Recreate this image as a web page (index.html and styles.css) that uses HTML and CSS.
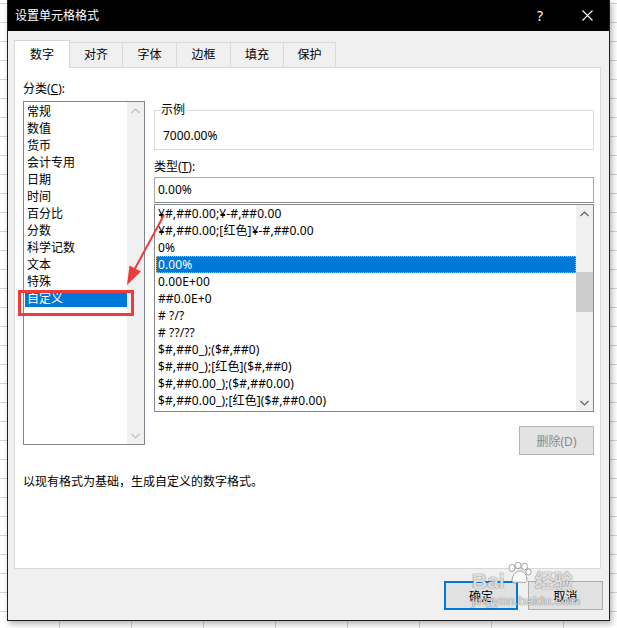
FILE: index.html
```html
<!DOCTYPE html>
<html lang="zh-CN">
<head>
    <meta charset="UTF-8">
    <title>设置单元格格式</title>
    <link rel="stylesheet" href="styles.css">
</head>
<body>
    <div class="screen">
        <div class="dialog">
            <div class="titlebar">
                <span class="title">设置单元格格式</span>
                <span class="help">?</span>
                <svg class="close" width="11" height="11" viewBox="0 0 11 11">
                    <path d="M0.5 0.5 L10.5 10.5 M10.5 0.5 L0.5 10.5" stroke="#fff" stroke-width="1.1" fill="none"/>
                </svg>
            </div>

            <div class="tabs">
                <div class="tab active w56">数字</div>
                <div class="tab w54">对齐</div>
                <div class="tab w55">字体</div>
                <div class="tab w55">边框</div>
                <div class="tab w54">填充</div>
                <div class="tab w53">保护</div>
            </div>

            <div class="panel">
                <div class="panel-body">
                    <div class="col-left">
                        <div class="label">分类(<u>C</u>):</div>
                        <div class="listbox cat">
                            <ul class="items">
                                <li>常规</li>
                                <li>数值</li>
                                <li>货币</li>
                                <li>会计专用</li>
                                <li>日期</li>
                                <li>时间</li>
                                <li>百分比</li>
                                <li>分数</li>
                                <li>科学记数</li>
                                <li>文本</li>
                                <li>特殊</li>
                                <li class="selected">自定义</li>
                            </ul>
                            <div class="vscroll disabled">
                                <div class="sb-btn">
                                    <svg width="9" height="6" viewBox="0 0 9 6"><polyline points="0.5,5 4.5,1 8.5,5" fill="none" stroke="currentColor" stroke-width="1.2"/></svg>
                                </div>
                                <div class="sb-track"></div>
                                <div class="sb-btn">
                                    <svg width="9" height="6" viewBox="0 0 9 6"><polyline points="0.5,1 4.5,5 8.5,1" fill="none" stroke="currentColor" stroke-width="1.2"/></svg>
                                </div>
                            </div>
                        </div>
                    </div>

                    <div class="col-right">
                        <fieldset class="sample">
                            <legend>示例</legend>
                            <div class="sample-value">7000.00%</div>
                        </fieldset>

                        <div class="label type-label">类型(<u>T</u>):</div>
                        <div class="textbox">0.00%</div>

                        <div class="listbox fmt">
                            <ul class="items">
                                <li>¥#,##0.00;¥-#,##0.00</li>
                                <li>¥#,##0.00;[红色]¥-#,##0.00</li>
                                <li>0%</li>
                                <li class="selected focus">0.00%</li>
                                <li>0.00E+00</li>
                                <li>##0.0E+0</li>
                                <li># ?/?</li>
                                <li># ??/??</li>
                                <li>$#,##0_);($#,##0)</li>
                                <li>$#,##0_);[红色]($#,##0)</li>
                                <li>$#,##0.00_);($#,##0.00)</li>
                                <li>$#,##0.00_);[红色]($#,##0.00)</li>
                            </ul>
                            <div class="vscroll">
                                <div class="sb-btn">
                                    <svg width="9" height="6" viewBox="0 0 9 6"><polyline points="0.5,5 4.5,1 8.5,5" fill="none" stroke="currentColor" stroke-width="1.2"/></svg>
                                </div>
                                <div class="sb-track"><div class="sb-thumb"></div></div>
                                <div class="sb-btn">
                                    <svg width="9" height="6" viewBox="0 0 9 6"><polyline points="0.5,1 4.5,5 8.5,1" fill="none" stroke="currentColor" stroke-width="1.2"/></svg>
                                </div>
                            </div>
                        </div>

                        <div class="del-row">
                            <button class="btn btn-disabled" disabled>删除(D)</button>
                        </div>
                    </div>
                </div>

                <p class="desc">以现有格式为基础，生成自定义的数字格式。</p>
            </div>

            <div class="footer">
                <button class="btn btn-ok">确定</button>
                <button class="btn btn-cancel">取消</button>
            </div>
        </div>

        <!-- 标注：红框和箭头 -->
        <div class="mark-box"></div>
        <svg class="mark-arrow" width="617" height="628" viewBox="0 0 617 628">
            <line x1="164" y1="215" x2="132" y2="274" stroke="#ee3b3b" stroke-width="2"/>
            <polygon points="127,285 129.5,265.5 141,271.5" fill="#ee3b3b"/>
        </svg>

        <!-- 水印 -->
        <div class="watermark">
            <div class="wm-top">
                <span class="wm-bai">Bai</span>
                <svg class="wm-paw" width="26" height="22" viewBox="0 0 26 22">
                    <g fill="rgba(255,255,255,0.8)" stroke="rgba(110,110,110,0.6)" stroke-width="1">
                        <ellipse cx="6" cy="6" rx="3" ry="3.6"/>
                        <ellipse cx="12" cy="3.5" rx="3" ry="3.2"/>
                        <ellipse cx="18.5" cy="4.5" rx="3" ry="3.4"/>
                        <ellipse cx="22.5" cy="10" rx="2.6" ry="3"/>
                        <path d="M6 19 C6 12 11 9 14 9 C18 9 21 13 21 18 C21 21 18 21 14 20 C10 21 6 22 6 19 Z"/>
                    </g>
                </svg>
                <span class="wm-cn">经验</span>
            </div>
            <div class="wm-url">jingyan.baidu.com</div>
        </div>
    </div>
</body>
</html>
```

FILE: styles.css
```css
* {
    box-sizing: border-box;
}
body {
    margin: 0;
    font-family: "Noto Sans", "Noto Sans CJK SC", sans-serif;
    font-size: 12px;
    line-height: 17px;
    color: #000;
}
.screen {
    position: relative;
    width: 617px;
    height: 628px;
    overflow: hidden;
    background-color: #fff;
    background-image:
        linear-gradient(#d4d4d4 1px, transparent 1px),
        linear-gradient(90deg, #d4d4d4 1px, transparent 1px);
    background-size: 100% 19px, 72px 100%;
    background-position: 0 3px, 59px 0;
}
.dialog {
    margin-left: 7px;
    width: 603px;
    height: 621px;
    background: #f0f0f0;
    border: 1px solid #1f1f1f;
    border-top: none;
    box-shadow: 2px 3px 6px rgba(0,0,0,0.3);
    display: flex;
    flex-direction: column;
}

/* 标题栏 */
.titlebar {
    height: 31px;
    flex-shrink: 0;
    background: #000;
    color: #fff;
    display: flex;
    align-items: center;
    padding: 0 16px 0 7px;
}
.title {
    flex: 1;
}
.help {
    width: 10px;
    text-align: center;
    font-size: 14px;
    margin-right: 37px;
}
.close {
    display: block;
}

/* 选项卡 */
.tabs {
    display: flex;
    align-items: flex-end;
    height: 27px;
    margin-top: 9px;
    padding-left: 6px;
    flex-shrink: 0;
}
.tab {
    height: 25px;
    line-height: 24px;
    text-align: center;
    background: #f0f0f0;
    border: 1px solid #d9d9d9;
    border-bottom: none;
    margin-left: -1px;
}
.tab.active {
    height: 28px;
    margin-left: 0;
    margin-bottom: -1px;
    padding-top: 2px;
    background: #fff;
    position: relative;
    z-index: 1;
}
.w53 { width: 53px; }
.w54 { width: 54px; }
.w55 { width: 55px; }
.w56 { width: 56px; }

/* 主面板 */
.panel {
    margin-left: 6px;
    width: 587px;
    height: 502px;
    flex-shrink: 0;
    background: #fff;
    border: 1px solid #d9d9d9;
    padding: 12px 0 0 8px;
}
.panel-body {
    display: flex;
    align-items: flex-start;
    gap: 9px;
}
.col-left {
    width: 122px;
}
.label {
    margin-bottom: 4px;
}
.col-right {
    width: 440px;
    margin-top: 23px;
}

/* 列表框 */
.listbox {
    display: flex;
    border: 1px solid #828790;
    background: #fff;
}
.listbox.cat {
    height: 344px;
}
.listbox.fmt {
    height: 208px;
    margin-top: 1px;
}
.items {
    flex: 1;
    list-style: none;
    margin: 0;
    padding: 1px 0 0 1px;
    overflow: hidden;
}
.fmt .items {
    padding-top: 0;
}
.items li {
    height: 17px;
    padding-left: 2px;
    white-space: nowrap;
}
.fmt .items li {
    letter-spacing: 0.1px;
}
.items li.selected {
    background: #0078d7;
    color: #fff;
}
.items li.focus {
    border: 1px dotted #e9b46a;
    padding-left: 1px;
    line-height: 15px;
}
.vscroll {
    width: 17px;
    background: #f0f0f0;
    display: flex;
    flex-direction: column;
    color: #606060;
}
.vscroll.disabled {
    color: #bfbfbf;
}
.sb-btn {
    height: 17px;
    display: flex;
    align-items: center;
    justify-content: center;
}
.sb-btn svg {
    display: block;
}
.sb-track {
    flex: 1;
}
.sb-thumb {
    margin-top: 50px;
    height: 40px;
    background: #cdcdcd;
}

/* 示例 */
.sample {
    margin: 0;
    padding: 10px 5px 5px 5px;
    border: 1px solid #dcdcdc;
}
.sample legend {
    padding: 0 1px;
    line-height: 14px;
}
.sample-value {
    padding-left: 3px;
}
.type-label {
    margin-top: 8px;
    margin-bottom: 2px;
}
.textbox {
    height: 26px;
    line-height: 24px;
    padding-left: 3px;
    border: 1px solid #a9a9a9;
    border-bottom-color: #8a8a8a;
}

/* 按钮 */
.btn {
    height: 29px;
    font-family: inherit;
    font-size: 12px;
    color: #000;
    background: #e1e1e1;
    border: 1px solid #adadad;
    padding: 0;
    cursor: pointer;
}
.del-row {
    display: flex;
    justify-content: flex-end;
    margin-top: 14px;
}
.btn-disabled {
    width: 75px;
    background: #e3e3e3;
    border-color: #b4b4b4;
    color: #8a8a8a;
}
.desc {
    margin: 18px 0 0 0;
}
.footer {
    display: flex;
    justify-content: flex-end;
    gap: 10px;
    padding: 12px 6px 0 0;
}
.btn-ok {
    width: 74px;
    border: 2px solid #0078d7;
}
.btn-cancel {
    width: 75px;
}

/* 标注 */
.mark-box {
    position: absolute;
    left: 18px;
    top: 290px;
    width: 116px;
    height: 26px;
    border: 3px solid #ee3b3b;
}
.mark-arrow {
    position: absolute;
    left: 0;
    top: 0;
    pointer-events: none;
}

/* 水印 */
.watermark {
    position: absolute;
    left: 472px;
    top: 558px;
    width: 118px;
    color: rgba(255,255,255,0.8);
    text-shadow: 0 0 1px rgba(80,80,80,0.8), 0 0 1px rgba(80,80,80,0.5);
    pointer-events: none;
}
.wm-top {
    display: flex;
    align-items: flex-end;
    height: 34px;
}
.wm-bai {
    font-family: "Liberation Sans", sans-serif;
    font-weight: bold;
    font-size: 21px;
    line-height: 22px;
}
.wm-paw {
    margin: 0 3px 8px 1px;
}
.wm-cn {
    font-size: 19px;
    line-height: 22px;
    font-weight: bold;
}
.wm-url {
    font-family: "Liberation Sans", sans-serif;
    font-size: 13px;
    line-height: 15px;
    margin-top: 1px;
    letter-spacing: 0.2px;
}
```
